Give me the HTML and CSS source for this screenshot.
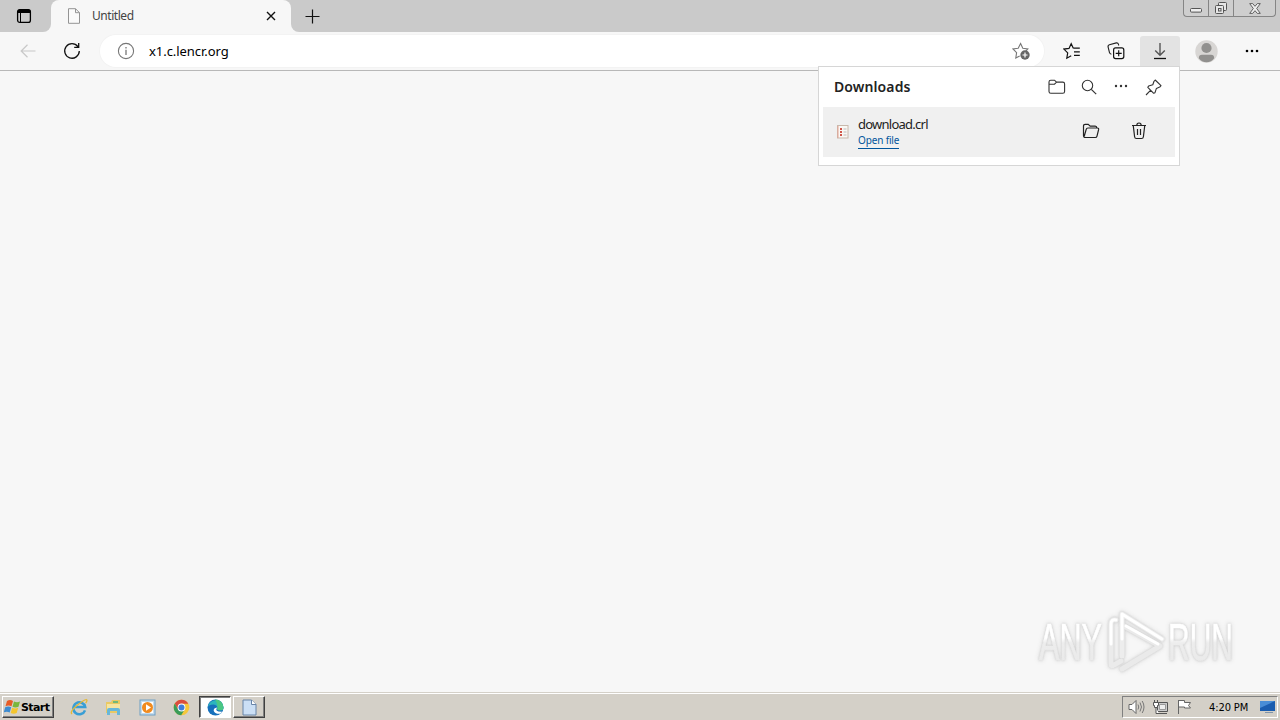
FILE: index.html
```html
<!DOCTYPE html>
<html lang="en">

<head>
    <meta charset="UTF-8">
    <meta name="viewport" content="width=device-width, initial-scale=1.0">
    <title>Untitled</title>
    <link rel="stylesheet" href="styles.css">
</head>

<body>
    <div class="desktop">
        <header class="titlebar">
            <button class="tab-actions">
                <svg width="16" height="16" viewBox="0 0 16 16"><rect x="1.6" y="1.6" width="12.8" height="12.8" rx="2.2" fill="none" stroke="#000" stroke-width="1.3"/><path d="M1.500 5V3.500q0-2 2-2h9q2 0 2 2V5z"/><path d="M4.500 5v9" stroke="#000"/></svg>
            </button>
            <div class="tab">
                <svg class="tab-icon" width="14" height="16" viewBox="0 0 14 16"><path d="M1.500.7h7l4 4v10.600h-11zM8.500.7v4h4" fill="#fafafa" stroke="#949494"/></svg>
                <span class="tab-title">Untitled</span>
                <svg width="10" height="10" viewBox="0 0 10 10"><path d="M1 1l8 8M9 1L1 9" stroke="#111" stroke-width="1.4"/></svg>
            </div>
            <button class="new-tab">
                <svg width="15" height="15" viewBox="0 0 15 15"><path d="M7.500.5v14M.5 7.500h14" stroke="#111" stroke-width="1.2"/></svg>
            </button>
            <div class="window-buttons">
                <span class="win-min"><svg width="12" height="5" viewBox="0 0 12 5"><rect x=".5" y=".5" width="11" height="3.600" rx="1" fill="#eee" stroke="#555"/></svg></span>
                <span class="win-restore"><svg width="14" height="14" viewBox="0 0 14 14"><g fill="#e6e6e6" stroke="#555"><rect x="4.500" y="1.500" width="8" height="8" rx="1"/><rect x="1.500" y="4.500" width="8" height="8" rx="1"/><rect x="4.500" y="7.500" width="2.500" height="2.500"/></g></svg></span>
                <span class="win-close"><svg width="12" height="11" viewBox="0 0 12 11"><path d="M.7.6h3L6 3.300 8.300.6h3L7.700 5.500l3.600 4.900h-3L6 7.700l-2.300 2.700h-3l3.600-4.900z" fill="#eee" stroke="#555" stroke-width=".9"/></svg></span>
            </div>
        </header>

        <nav class="toolbar">
            <button class="tool back"><svg width="16" height="14" viewBox="0 0 16 14"><path d="M7.500.8L1.200 7l6.300 6.200M1.200 7h14.300" fill="none" stroke="#c8c8c8" stroke-width="1.2"/></svg></button>
            <button class="tool refresh"><svg width="18" height="18" viewBox="0 0 18 18"><path d="M14.900 4.600A7.300 7.300 0 1 0 16.300 9M15.700 1v4.400h-4.500" fill="none" stroke="#111" stroke-width="1.3"/></svg></button>
            <div class="address">
                <svg class="info" width="18" height="18" viewBox="0 0 18 18"><circle cx="9" cy="9" r="7.600" fill="none" stroke="#777" stroke-width="1.1"/><path d="M9 7.800V13M9 5v1.400" stroke="#777" stroke-width="1.3"/></svg>
                <span class="url">x1.c.lencr.org</span>
                <svg width="18" height="18" viewBox="0 0 18 18"><path d="M7.700 14l-3.900 2 .8-5.300L1 7l5.200-.8 2.400-4.600 2.200 4.700 5 .7-2 2.100" fill="none" stroke="#777" stroke-width="1.1"/><circle cx="13" cy="13" r="4.700" fill="#666"/><path d="M13 10.500v5M10.500 13h5" stroke="#fff" stroke-width="1.2"/></svg>
            </div>
            <button class="tool"><svg width="18" height="18" viewBox="0 0 18 18"><path d="M10.300 6.200L8.200 1.700 6 6.400.9 7.100l3.800 3.800-.9 5.300 4.400-2.500M10.300 6.200h6.500M11 9.800h5.800M11 13.400h5.800" fill="none" stroke="#111" stroke-width="1.2"/></svg></button>
            <button class="tool"><svg width="18" height="18" viewBox="0 0 18 18"><path d="M4.400 12.200q-1.500-.2-1.900-1.600L1.100 5q-.4-1.800 1.300-2.300l6.900-1.800q1.600-.3 2.100 1.300l.4 1.300" fill="none" stroke="#222" stroke-width="1.1"/><rect x="6.600" y="5.900" width="10.200" height="10.700" rx="2" fill="#f7f7f7" stroke="#111" stroke-width="1.2"/><path d="M11.700 8.300v6M8.700 11.300h6" stroke="#111" stroke-width="1.2"/></svg></button>
            <button class="tool active"><svg width="14" height="18" viewBox="0 0 14 18"><path d="M7 1v12M2.200 8.400L7 13.200l4.800-4.800" fill="none" stroke="#555" stroke-width="1.4"/><path d="M1 16.500h12" stroke="#111" stroke-width="1.3"/></svg></button>
            <button class="tool profile"><svg width="23" height="23" viewBox="0 0 23 23"><circle cx="11.500" cy="11.500" r="11.200" fill="#d8d6d4"/><circle cx="11.500" cy="8" r="5.100" fill="#91908e"/><path d="M3.800 18.200q0-3.400 3.200-3.400h9q3.200 0 3.200 3.400-2.800 4.100-7.700 4.100t-7.700-4.100z" fill="#91908e"/></svg></button>
            <button class="tool more"><svg width="14" height="4" viewBox="0 0 14 4"><circle cx="2" cy="2" r="1.300"/><circle cx="7" cy="2" r="1.300"/><circle cx="12" cy="2" r="1.300"/></svg></button>
        </nav>

        <main class="page">
            <section class="downloads">
                <div class="downloads-head">
                    <h1>Downloads</h1>
                    <svg width="18" height="16" viewBox="0 0 18 16"><path d="M1 3q0-1.800 1.800-1.800h3.700l2 1.900h6.300q1.800 0 1.800 1.800v7.600q0 1.800-1.800 1.800h-12Q1 14.300 1 12.500zM1 5.200h5.500l2-2.100" fill="none" stroke="#333" stroke-width="1.1"/></svg>
                    <svg width="16" height="16" viewBox="0 0 16 16"><circle cx="6.500" cy="6.500" r="5.200" fill="none" stroke="#333" stroke-width="1.1"/><path d="M10.300 10.300l4.900 4.900" stroke="#333" stroke-width="1.2"/></svg>
                    <svg class="dots" width="14" height="4" viewBox="0 0 14 4" fill="#333"><circle cx="2" cy="2" r="1.200"/><circle cx="7" cy="2" r="1.200"/><circle cx="12" cy="2" r="1.200"/></svg>
                    <svg class="pin" width="17" height="17" viewBox="0 0 17 17"><path d="M10.200 1l5.800 5.600-1.300 1.500-3.300 1.300-1.400 4.300-1.300.6-5.900-6 .8-1.200 4.200-1.400L9 2.300zM5.700 11.200L1 16" fill="none" stroke="#333" stroke-width="1.1" stroke-linejoin="round"/></svg>
                </div>
                <div class="download-item">
                    <svg class="file-icon" width="12" height="14" viewBox="0 0 12 14"><rect x=".5" y=".5" width="10.500" height="12.500" fill="#faf8f4" stroke="#c8b9ac"/><path d="M1 1v12" stroke="#e5a395"/><path d="M3 3h2v2H3zM3 6h2v2H3zM3 9h2v2H3z" fill="#cf5549"/><path d="M6.500 4h3M6.500 7h3M6.500 10h3" stroke="#bcbcbc"/></svg>
                    <div class="file-info">
                        <span class="file-name">download.crl</span>
                        <a class="open-file">Open file</a>
                    </div>
                    <svg class="folder" width="18" height="16" viewBox="0 0 18 16"><path d="M3.500 14.500q-2 0-2-2V3q0-1.700 1.700-1.700h3l2 1.800h5q1.600 0 1.600 1.900M3.500 14.500h9.700q1.500 0 1.800-1.400l1.600-6.400q.3-1.700-1.300-1.700H6q-1.500 0-1.800 1.300L2.300 13" fill="none" stroke="#222" stroke-width="1.2"/></svg>
                    <svg class="trash" width="16" height="18" viewBox="0 0 16 18"><path d="M1 3.500h14M5.800 3.500q0-2.500 2.200-2.500t2.200 2.500M2.300 4l1.300 10.800q.2 1.700 1.800 1.700h5.200q1.600 0 1.800-1.700L13.700 4M6.500 7v6M9.500 7v6" fill="none" stroke="#222" stroke-width="1.2"/></svg>
                </div>
            </section>

            <svg class="watermark" width="250" height="76" viewBox="0 0 250 76">
                <defs>
                    <linearGradient id="fade" x1="0" y1="0" x2="0" y2="60" gradientUnits="userSpaceOnUse">
                        <stop offset=".5" stop-color="#fff"/>
                        <stop offset=".58" stop-color="#ededed"/>
                        <stop offset="1" stop-color="#e9e9e9"/>
                    </linearGradient>
                </defs>
                <g fill="url(#fade)" stroke="url(#fade)" stroke-width=".7">
                    <text x="9" y="52" textLength="63" lengthAdjust="spacingAndGlyphs">ANY</text>
                    <text x="138" y="52" textLength="65" lengthAdjust="spacingAndGlyphs">RUN</text>
                </g>
                <g fill="none" stroke-linecap="round" stroke-linejoin="round">
                    <path d="M86 12q-5-1-5 4v40q0 3 3 1l7-4" stroke="#ebebeb" stroke-width="5"/>
                    <path d="M92 48V6l40 25" stroke="#ededed" stroke-width="5"/>
                    <path d="M92 17l38 21-38 23" stroke="#eaeaea" stroke-width="5"/>
                    <path d="M86 12q-5-1-5 4v20M92 31V6l40 25M96 18l32 18" stroke="#fff" stroke-width="3"/>
                </g>
            </svg>
        </main>

        <footer class="taskbar">
            <button class="start">
                <svg width="17" height="16" viewBox="0 0 17 16"><path d="M3 2q3-2 6 0L7.500 7.300q-3-1.700-6 0z" fill="#e75b25"/><path d="M10 2.500q3 1.500 6 0l-1.500 5.300q-3 1.500-6 0z" fill="#79b63c"/><path d="M1.200 8.300q3-1.700 6 0l-1.500 5.200q-3-1.600-6 0z" fill="#3d8bd0"/><path d="M8.200 8.800q3 1.500 6 0L12.700 14q-3 1.500-6 0z" fill="#f4c52d"/></svg>
                <span>Start</span>
            </button>
            <div class="quick">
                <span class="task"><svg width="18" height="18" viewBox="0 0 18 18"><path d="M15 12.300A6 6 0 1 1 15.200 9H5" fill="none" stroke="#399ed5" stroke-width="2.500"/><path d="M2 16Q-.5 14 6 8.300T16.300 1.500q1.600.6-.6 3.700" fill="none" stroke="#e6b935" stroke-width="1.3"/></svg></span>
                <span class="task"><svg width="17" height="17" viewBox="0 0 17 17"><path d="M1 3h5l1-2h8v13H1z" fill="#e9c964"/><path d="M2 5h13v7H2z" fill="#f6e4a0"/><path d="M8 2h5v2H8z" fill="#73b879"/><path d="M2 16v-5q0-2 2-2h9q2 0 2 2v5h-3v-4H5v4z" fill="#68b7d9"/></svg></span>
                <span class="task"><svg width="17" height="17" viewBox="0 0 17 17"><rect x="1" y="1" width="15" height="15" fill="#c4dced" stroke="#6e9fc4"/><rect x="3" y="3" width="11" height="11" fill="#fff"/><circle cx="8.500" cy="8.500" r="5.500" fill="#f08b1f"/><path d="M7 5.300l5 3.200-5 3.200z" fill="#fff"/></svg></span>
                <span class="task"><svg width="17" height="17" viewBox="0 0 17 17"><circle cx="8.500" cy="8.500" r="7.800" fill="#f5c73b"/><path d="M1.750 4.600A7.800 7.800 0 0 1 15.300 4.800H8.500L5 10.500z" fill="#da4d3f"/><path d="M1.750 4.600A7.800 7.800 0 0 0 8.200 16.300l3.500-5.800H5.100z" fill="#3a9c58"/><circle cx="8.500" cy="8.500" r="3.900" fill="#fff"/><circle cx="8.500" cy="8.500" r="3" fill="#3f7edb"/></svg></span>
                <span class="task pressed"><svg width="17" height="17" viewBox="0 0 17 17"><circle cx="8.500" cy="8.500" r="8" fill="#1670bc"/><path d="M.6 8.200A8 8 0 0 1 16.500 8.700q0 3-4.500 2.600-2.400-.4-1.600-2Q10.600 5.900 6.500 5.500 2 5.400.6 8.200z" fill="#2cb5bd"/><path d="M8 .6a8 8 0 0 1 8.500 8.100q0 3-4.500 2.600-2.400-.4-1.600-2Q11 5.500 8 .6z" fill="#4bc783"/><path d="M10 8.500q-2.800 4.500 5.200 4.300l-1.800 2q-5.800.4-6.700-3.100Q6.500 9 10 8.500z" fill="#fff"/></svg></span>
                <span class="task raised"><svg width="15" height="17" viewBox="0 0 15 17"><path d="M1 1h8.500L14 5.500V16H1z" fill="#cbdff5" stroke="#6784a8"/><path d="M9.500 1v4.500H14" fill="#fff" stroke="#6784a8"/></svg></span>
            </div>
            <div class="tray">
                <svg width="17" height="16" viewBox="0 0 17 16"><path d="M1 5.500h3l4-4v13l-4-4H1z" fill="#fff" stroke="#666"/><path d="M10 5.500q1.500 2.500 0 5M12 3.500q3 4.500 0 9M14.200 2q3.600 6 0 12" fill="none" stroke="#777"/></svg>
                <svg width="17" height="16" viewBox="0 0 17 16"><path d="M5.500 3.500h10v9h-10zM7 14.500h8" fill="#ccc" stroke="#555"/><path d="M7.500 5.500h6v5h-6z" fill="#eee" stroke="#999"/><path d="M1.500 3.500h5v3h-1v2h-3v-2h-1zM2.500 1v2.500M5.500 1v2.500M4 8.500v6h3" fill="#fff" stroke="#555"/></svg>
                <svg width="17" height="16" viewBox="0 0 17 16"><path d="M2.500 1v14M2.500 1.500h6v2h6l-2 3 2 2.500h-6v-1h-6" fill="#fff" stroke="#666"/></svg>
                <time>4:20 PM</time>
                <svg class="show-desktop" width="17" height="16" viewBox="0 0 17 16"><path d="M1 2h15v10H1z" fill="#1b5daf"/><path d="M1 2h15L1 9z" fill="#498dd6"/><path d="M6 13h8v1H6z" fill="#8094aa"/></svg>
            </div>
        </footer>
    </div>
</body>

</html>
```
FILE: styles.css
```css
* {
    box-sizing: border-box;
}

body {
    margin: 0;
    font-family: "Noto Sans", sans-serif;
    color: #000;
    overflow: hidden;
}

button {
    border: 0;
    padding: 0;
    background: none;
    font: inherit;
}

svg {
    display: block;
    flex: none;
}

.desktop {
    display: flex;
    flex-direction: column;
    width: 1280px;
    height: 720px;
    background: #f7f7f7;
}

.titlebar {
    display: flex;
    height: 32px;
    background: linear-gradient(#cacaca 16px, #f7f7f7 16px);
}

.tab-actions {
    width: 51px;
    padding-left: 16px;
    background: #cacaca;
    border-bottom-right-radius: 8px;
}

.tab {
    display: flex;
    align-items: center;
    width: 240px;
    padding: 0 15px 0 16px;
    background: #f7f7f7;
    border-radius: 8px 8px 0 0;
    font-size: 12px;
    color: #444;
}

.tab-title {
    flex: 1;
    margin-left: 11px;
    padding-bottom: 1px;
    letter-spacing: -0.45px;
}

.new-tab {
    display: flex;
    flex: 1;
    align-items: center;
    padding-left: 14px;
    background: #cacaca;
    border-bottom-left-radius: 8px;
}

.window-buttons {
    display: flex;
    width: 97px;
    padding-right: 4px;
    background: #cacaca;
}

.window-buttons span {
    display: flex;
    justify-content: center;
    align-items: center;
    height: 17px;
    border: 1px solid #858585;
    border-top: 0;
    border-right: 0;
    background: #cecece;
}

.window-buttons .win-min {
    width: 25px;
    padding-top: 4px;
    border-bottom-left-radius: 4px;
}

.window-buttons .win-restore {
    width: 25px;
}

.window-buttons .win-close {
    width: 43px;
    border-right: 1px solid #858585;
    border-bottom-right-radius: 4px;
}

.toolbar {
    display: flex;
    align-items: center;
    height: 39px;
    border-bottom: 1px solid #b8b8b8;
}

.tool {
    display: flex;
    justify-content: center;
    align-items: center;
    width: 44px;
    height: 30px;
}

.back {
    width: 56px;
}

.refresh {
    width: 32px;
}

.address {
    display: flex;
    align-items: center;
    width: 944px;
    height: 32px;
    margin: 0 6px 0 12px;
    padding: 0 14px 0 17px;
    border-radius: 16px;
    background: #fff;
    box-shadow: 0 0 0 1px #f3f3f3;
}

.url {
    flex: 1;
    margin-left: 14px;
    font-size: 13px;
    letter-spacing: -0.05px;
}

.tool.active {
    width: 40px;
    margin-left: 2px;
    border-radius: 3px 3px 0 0;
    background: #e3e3e3;
}

.profile {
    width: 52px;
}

.more {
    width: 40px;
}

.page {
    position: relative;
    flex: 1;
}

/* flyout hangs from the toolbar button */
.downloads {
    position: absolute;
    top: -5px;
    right: 100px;
    width: 362px;
    height: 100px;
    border: 1px solid #d6d6d6;
    background: #fff;
}

.downloads-head {
    display: flex;
    align-items: center;
    gap: 15px;
    height: 40px;
    padding: 0 17px 0 15px;
}

.downloads-head h1 {
    flex: 1;
    margin: 0;
    padding-bottom: 2px;
    font-size: 14px;
    font-weight: 600;
    letter-spacing: 0.1px;
    color: #222;
}

.dots {
    margin: 0 2px 2px 2px;
}

.download-item {
    display: flex;
    align-items: center;
    height: 50px;
    margin: 0 4px;
    padding: 0 28px 0 14px;
    background: #f0f0f0;
}

.file-info {
    display: flex;
    flex: 1;
    flex-direction: column;
    align-items: flex-start;
    margin-left: 9px;
}

.file-name {
    font-size: 13px;
    line-height: 17px;
    letter-spacing: -0.75px;
    color: #222;
}

.open-file {
    border-bottom: 1px solid #00559c;
    font-size: 10px;
    line-height: 15px;
    letter-spacing: -0.15px;
    color: #00559c;
}

.folder {
    margin-bottom: 2px;
}

.trash {
    margin: 0 0 2px 31px;
}

.watermark {
    position: absolute;
    right: 0;
    bottom: 8px;
    font-family: "Liberation Sans", sans-serif;
    font-size: 51px;
    filter: drop-shadow(0 0 1px #ccc) drop-shadow(0 0 2px #ddd);
}

.taskbar {
    display: flex;
    align-items: center;
    height: 28px;
    padding: 1px 2px 0;
    border-top: 1px solid #d4d0c8;
    box-shadow: inset 0 1px 0 #fff;
    background: #d4d0c8;
    font-family: "DejaVu Sans Condensed", "DejaVu Sans", sans-serif;
}

.start,
.raised {
    border: 1px solid #404040;
    border-top-color: #fff;
    border-left-color: #fff;
    box-shadow: inset -1px -1px 0 #808080;
}

.start {
    display: flex;
    align-items: center;
    width: 52px;
    height: 22px;
    padding-left: 1px;
    font-family: "DejaVu Sans", sans-serif;
    font-size: 11px;
    font-weight: bold;
    letter-spacing: -0.6px;
}

.quick {
    display: flex;
    flex: 1;
    gap: 2px;
    margin-left: 9px;
}

.task {
    display: flex;
    justify-content: center;
    align-items: center;
    width: 32px;
    height: 22px;
}

.pressed {
    border: 1px solid #fff;
    border-top-color: #404040;
    border-left-color: #404040;
    box-shadow: inset 1px 1px 0 #808080;
    background: #fff;
}

.tray {
    display: flex;
    align-items: center;
    gap: 7px;
    width: 156px;
    height: 22px;
    padding-left: 5px;
    border: 1px solid #fff;
    border-top-color: #808080;
    border-left-color: #808080;
}

.tray time {
    width: 43px;
    margin-left: 9px;
    font-size: 11px;
    letter-spacing: -0.1px;
    white-space: nowrap;
}
```
